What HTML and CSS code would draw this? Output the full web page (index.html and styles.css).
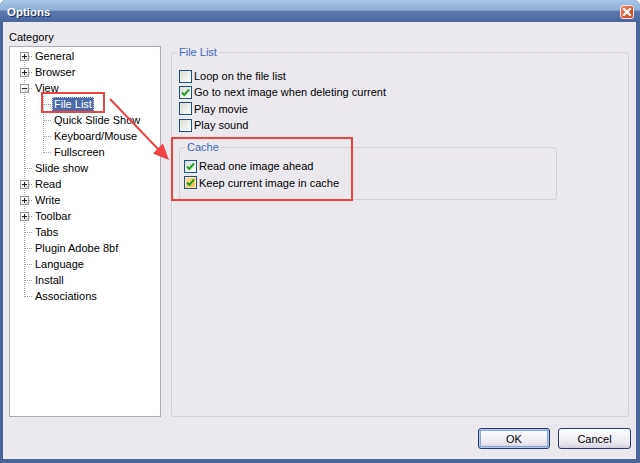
FILE: index.html
```html
<!DOCTYPE html>
<html>
<head>
  <title>Options</title>
  <link rel="stylesheet" href="styles.css">
</head>
<body>

  <div class="window">
    <div class="titlebar">
      <span class="title">Options</span>
      <span class="close">
        <svg width="12" height="12" viewBox="0 0 12 12"><path d="M3 3 L9 9 M9 3 L3 9" stroke="#fff" stroke-width="2.2" stroke-linecap="square"/></svg>
      </span>
    </div>

    <div class="body">
      <div class="cat-label">Category</div>

      <div class="main">
        <div class="tree">
          <div class="node"><span class="c1 first"><span class="exp plus"></span></span><span class="label">General</span></div>
          <div class="node"><span class="c1 vh"><span class="exp plus"></span></span><span class="label">Browser</span></div>
          <div class="node"><span class="c1 vh"><span class="exp minus"></span></span><span class="label">View</span></div>
          <div class="node"><span class="c1 v"></span><span class="c2 vh"></span><span class="label selected">File List</span></div>
          <div class="node"><span class="c1 v"></span><span class="c2 vh"></span><span class="label">Quick Slide Show</span></div>
          <div class="node"><span class="c1 v"></span><span class="c2 vh"></span><span class="label">Keyboard/Mouse</span></div>
          <div class="node"><span class="c1 v"></span><span class="c2 last"></span><span class="label">Fullscreen</span></div>
          <div class="node"><span class="c1 vh"></span><span class="label">Slide show</span></div>
          <div class="node"><span class="c1 vh"><span class="exp plus"></span></span><span class="label">Read</span></div>
          <div class="node"><span class="c1 vh"><span class="exp plus"></span></span><span class="label">Write</span></div>
          <div class="node"><span class="c1 vh"><span class="exp plus"></span></span><span class="label">Toolbar</span></div>
          <div class="node"><span class="c1 vh"></span><span class="label">Tabs</span></div>
          <div class="node"><span class="c1 vh"></span><span class="label">Plugin Adobe 8bf</span></div>
          <div class="node"><span class="c1 vh"></span><span class="label">Language</span></div>
          <div class="node"><span class="c1 vh"></span><span class="label">Install</span></div>
          <div class="node"><span class="c1 last"></span><span class="label">Associations</span></div>
        </div>

        <fieldset class="group page">
          <legend>File List</legend>
          <div class="checks">
            <div class="row"><span class="box"></span>Loop on the file list</div>
            <div class="row"><span class="box"><svg width="11" height="11" viewBox="0 0 11 11"><path d="M2 5.5 L4.3 8 L9 2.5" fill="none" stroke="#21a121" stroke-width="2"/></svg></span>Go to next image when deleting current</div>
            <div class="row"><span class="box"></span>Play movie</div>
            <div class="row"><span class="box"></span>Play sound</div>

            <fieldset class="group cache">
              <legend>Cache</legend>
              <div class="row"><span class="box"><svg width="11" height="11" viewBox="0 0 11 11"><path d="M2 5.5 L4.3 8 L9 2.5" fill="none" stroke="#21a121" stroke-width="2"/></svg></span>Read one image ahead</div>
              <div class="row"><span class="box hot"><svg width="11" height="11" viewBox="0 0 11 11"><path d="M2 5.5 L4.3 8 L9 2.5" fill="none" stroke="#21a121" stroke-width="2"/></svg></span>Keep current image in cache</div>
            </fieldset>
          </div>
        </fieldset>
      </div>

      <div class="buttons">
        <button class="btn default">OK</button>
        <button class="btn">Cancel</button>
      </div>
    </div>

    <!-- red annotations drawn over the dialog -->
    <svg class="annot" width="640" height="463" viewBox="0 0 640 463">
      <rect x="42" y="93" width="62" height="19" fill="none" stroke="#f04444" stroke-width="2"/>
      <rect x="172" y="138" width="180" height="62" fill="none" stroke="#f04444" stroke-width="2"/>
      <line x1="110" y1="99" x2="159" y2="150" stroke="#f04444" stroke-width="2"/>
      <polygon points="169,160 152.9,153.4 162.9,143.6" fill="#f04444"/>
    </svg>
  </div>

</body>
</html>
```

FILE: styles.css
```css
body {
  margin: 0;
  font-family: "Liberation Sans", Arial, sans-serif;
  font-size: 11px;
  color: #000;
}
.window {
  position: relative;
  width: 640px;
  height: 463px;
  background: #4a6699;
  display: flex;
  flex-direction: column;
  border-radius: 6px 6px 0 0;
}
.titlebar {
  height: 22px;
  display: flex;
  align-items: center;
  justify-content: space-between;
  padding: 0 6px 0 7px;
  border-radius: 6px 6px 0 0;
  background: linear-gradient(#a9c7e7 0, #8eb1d9 45%, #5c79b0 52%, #4c669b 100%);
}
.title {
  color: #fff;
  font-weight: bold;
  font-size: 11.5px;
  text-shadow: 1px 1px 0 #1d2c5c;
  padding-top: 1px;
}
.close {
  width: 14px;
  height: 14px;
  box-sizing: border-box;
  border: 1px solid #f0e4e4;
  border-radius: 3px;
  background: linear-gradient(135deg, #ec8d6c, #d9532e 60%, #c8462a);
  display: flex;
  align-items: center;
  justify-content: center;
  margin-top: 2px;
}
.body {
  flex: 1;
  margin: 0 4px 4px 3px;
  background: #ebe9ee;
  padding: 8px 6px 10px 6px;
  display: flex;
  flex-direction: column;
}
.cat-label {
  line-height: 14px;
  height: 14px;
}
.main {
  margin-top: 2px;
  height: 371px;
  display: flex;
  gap: 10px;
}

/* tree */
.tree {
  width: 152px;
  box-sizing: border-box;
  background: #fff;
  border: 1px solid #a9aeb6;
  padding-top: 1px;
}
.node {
  height: 16px;
  display: flex;
  align-items: center;
}
.c1, .c2 {
  height: 16px;
  flex: none;
  display: flex;
  align-items: center;
  --dv: repeating-linear-gradient(to bottom, #a0a0a0 0 1px, transparent 1px 2px);
  --dh: repeating-linear-gradient(to right, #a0a0a0 0 1px, transparent 1px 2px);
}
.c1 { width: 23px; }
.c2 { width: 19px; }
.c1.vh { background: var(--dh) 15px 8px / 8px 1px no-repeat, var(--dv) 14px 0 / 1px 16px no-repeat; }
.c1.first { background: var(--dh) 15px 8px / 8px 1px no-repeat, var(--dv) 14px 8px / 1px 8px no-repeat; }
.c1.last { background: var(--dh) 15px 8px / 8px 1px no-repeat, var(--dv) 14px 0 / 1px 9px no-repeat; }
.c1.v { background: var(--dv) 14px 0 / 1px 16px no-repeat; }
.c2.vh { background: var(--dh) 11px 8px / 8px 1px no-repeat, var(--dv) 10px 0 / 1px 16px no-repeat; }
.c2.last { background: var(--dh) 11px 8px / 8px 1px no-repeat, var(--dv) 10px 0 / 1px 9px no-repeat; }
.exp {
  width: 9px;
  height: 9px;
  box-sizing: border-box;
  margin-left: 10px;
  margin-top: 1px;
  border: 1px solid #8a9aae;
}
.exp.plus {
  background:
    linear-gradient(#222, #222) center / 5px 1px no-repeat,
    linear-gradient(#222, #222) center / 1px 5px no-repeat,
    linear-gradient(135deg, #fff 30%, #d4d0c8);
}
.exp.minus {
  background:
    linear-gradient(#222, #222) center / 5px 1px no-repeat,
    linear-gradient(135deg, #fff 30%, #d4d0c8);
}
.label {
  padding: 0 2px;
  line-height: 15px;
  white-space: nowrap;
}
.label.selected {
  background: #4b6aa7;
  color: #fff;
  outline: 1px dotted #c8d4ec;
  outline-offset: -1px;
}

/* group boxes */
.group {
  margin: 0;
  border: 1px solid #d3d2d6;
  border-radius: 3px;
  min-width: 0;
}
.group legend {
  color: #3d68bd;
  padding: 0 2px;
  line-height: 12px;
}
.page {
  width: 458px;
  box-sizing: border-box;
  padding: 0 0 0 5px;
}
.checks {
  margin-top: 10px;
  padding-left: 2px;
}
.row {
  height: 16.3px;
  display: flex;
  align-items: center;
  white-space: nowrap;
}
.box {
  width: 13px;
  height: 13px;
  box-sizing: border-box;
  border: 1px solid #1d5182;
  background: linear-gradient(135deg, #dcdcd6, #fff);
  margin-right: 2px;
  display: flex;
  align-items: center;
  justify-content: center;
  flex: none;
}
.box.hot {
  background: linear-gradient(135deg, #fbe1a0, #f3b443);
  box-shadow: inset 0 0 0 1px #fce7b6;
}
.cache {
  width: 378px;
  box-sizing: border-box;
  margin-top: 8px;
  padding: 0 0 8px 4px;
}
.cache legend {
  margin-left: 1px;
}
.cache .row:first-of-type {
  margin-top: 5px;
}

/* buttons */
.buttons {
  margin-top: 11px;
  display: flex;
  justify-content: flex-end;
  gap: 8px;
  margin-right: -1px;
}
.btn {
  height: 21px;
  width: 73px;
  font-family: "Liberation Sans", Arial, sans-serif;
  font-size: 11px;
  color: #000;
  border: 1px solid #233a6b;
  border-radius: 3px;
  background: linear-gradient(#fdfdfe, #eceaf0 70%, #d3d0db);
  padding: 0;
}
.btn.default {
  width: 72px;
  box-shadow: inset 0 0 0 1px #b6c8e8, inset 0 0 0 2px #8aa6d8;
}
.annot {
  position: absolute;
  left: 0;
  top: 0;
  pointer-events: none;
}
```
